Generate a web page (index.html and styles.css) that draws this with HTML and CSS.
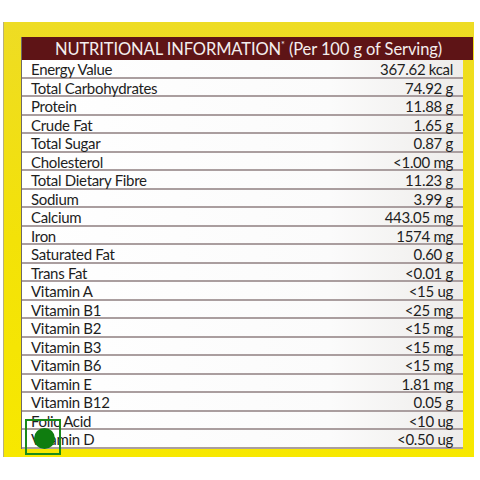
FILE: index.html
```html
<!DOCTYPE html>
<html lang="en">
<head>
  <meta charset="UTF-8">
  <meta name="viewport" content="width=device-width, initial-scale=1.0">
  <title>Nutritional Information</title>
  <link rel="stylesheet" href="styles.css">
</head>
<body>
  <div class="panel">
    <div class="table">
      <div class="table-header">NUTRITIONAL INFORMATION<sup>*</sup> (Per 100 g of Serving)</div>
      <div class="row"><span>Energy Value</span><span>367.62 kcal</span></div>
      <div class="row"><span>Total Carbohydrates</span><span>74.92 g</span></div>
      <div class="row"><span>Protein</span><span>11.88 g</span></div>
      <div class="row"><span>Crude Fat</span><span>1.65 g</span></div>
      <div class="row"><span>Total Sugar</span><span>0.87 g</span></div>
      <div class="row"><span>Cholesterol</span><span>&lt;1.00 mg</span></div>
      <div class="row"><span>Total Dietary Fibre</span><span>11.23 g</span></div>
      <div class="row"><span>Sodium</span><span>3.99 g</span></div>
      <div class="row"><span>Calcium</span><span>443.05 mg</span></div>
      <div class="row"><span>Iron</span><span>1574 mg</span></div>
      <div class="row"><span>Saturated Fat</span><span>0.60 g</span></div>
      <div class="row"><span>Trans Fat</span><span>&lt;0.01 g</span></div>
      <div class="row"><span>Vitamin A</span><span>&lt;15 ug</span></div>
      <div class="row"><span>Vitamin B1</span><span>&lt;25 mg</span></div>
      <div class="row"><span>Vitamin B2</span><span>&lt;15 mg</span></div>
      <div class="row"><span>Vitamin B3</span><span>&lt;15 mg</span></div>
      <div class="row"><span>Vitamin B6</span><span>&lt;15 mg</span></div>
      <div class="row"><span>Vitamin E</span><span>1.81 mg</span></div>
      <div class="row"><span>Vitamin B12</span><span>0.05 g</span></div>
      <div class="row"><span>Folic Acid</span><span>&lt;10 ug</span></div>
      <div class="row"><span>Vitamin D</span><span>&lt;0.50 ug</span></div>
    </div>
    <div class="marker"><div class="dot"></div></div>
  </div>
</body>
</html>
```

FILE: styles.css
```css
body {
  margin: 0;
  background-color: #ffffff;
  font-family: Lato, "Open Sans", sans-serif;
}
.panel {
  position: relative;
  margin: 22px 0 0 3px;
  width: 471px;
  height: 435px;
  box-sizing: border-box;
  padding: 15px 0 0 17px;
  background: linear-gradient(180deg, #eedc24 0%, #f3e208 50%, #f7e800 100%);
  border-left: 1px solid #b8b07a;
}
.table {
  width: 441px;
  background: linear-gradient(90deg, #ffffff 0%, #fbfbfb 70%, #eeecea 100%);
  border-left: 1px solid #6f6a66;
}
.table-header {
  height: 23px;
  line-height: 24px;
  background-color: #5e1416;
  color: #f4eeee;
  font-size: 16.5px;
  letter-spacing: -0.1px;
  text-align: center;
  padding-left: 2px;
  width: 451px;
  box-sizing: border-box;
}
.table-header sup {
  font-size: 9px;
  vertical-align: 7px;
  line-height: 0;
}
.row {
  display: flex;
  justify-content: space-between;
  height: 18.5px;
  box-sizing: border-box;
  padding: 0 10px 0 9px;
  border-bottom: 2px solid #aa9e9f;
  font-size: 15px;
  letter-spacing: -0.3px;
  line-height: 18px;
  color: #1e1e1e;
}
.marker {
  position: absolute;
  left: 21px;
  top: 397px;
  width: 36px;
  height: 36px;
  box-sizing: border-box;
  border: 2px solid #1a8a1a;
}
.dot {
  position: absolute;
  left: 7px;
  top: 7px;
  width: 21px;
  height: 21px;
  border-radius: 50%;
  background-color: #0f7d0f;
}
```
